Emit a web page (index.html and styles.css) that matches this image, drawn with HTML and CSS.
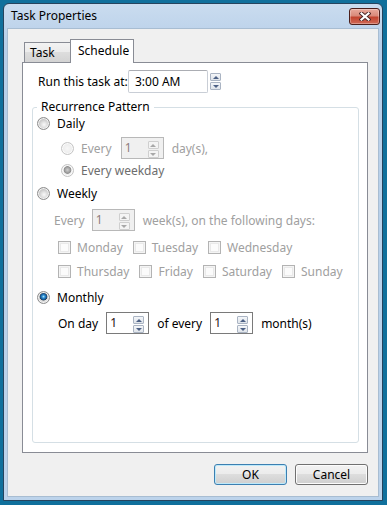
FILE: index.html
```html
<!DOCTYPE html>
<html lang="en">
<head>
    <meta charset="UTF-8">
    <meta name="viewport" content="width=device-width, initial-scale=1.0">
    <title>Task Properties</title>
    <link rel="stylesheet" href="styles.css">
</head>
<body>
    <div class="window">
        <div class="titlebar">
            <span class="title">Task Properties</span>
            <button class="close" type="button" aria-label="Close">
                <svg width="12" height="9" viewBox="0 0 12 9">
                    <path d="M2.5 1.5 L9.5 7.5 M9.5 1.5 L2.5 7.5" stroke="#4a2626" stroke-width="4" stroke-linecap="square" fill="none"/>
                    <path d="M2.5 1.5 L9.5 7.5 M9.5 1.5 L2.5 7.5" stroke="#fff" stroke-width="2.2" stroke-linecap="square" fill="none"/>
                </svg>
            </button>
        </div>
        <div class="client">
            <div class="tabs">
                <div class="tab">Task</div>
                <div class="tab active">Schedule</div>
            </div>
            <div class="panel">
                <div class="run-row">
                    <span class="run-label">Run this task at:</span>
                    <div class="time-box">3:00 AM</div>
                    <div class="spin-btns side"><span class="up"></span><span class="down"></span></div>
                </div>

                <fieldset class="group">
                    <legend>Recurrence Pattern</legend>

                    <div class="row r-daily">
                        <span class="radio"></span>
                        <span>Daily</span>
                    </div>
                    <div class="row tall r-daily-every sub">
                        <span class="radio disabled"></span>
                        <span class="muted">Every</span>
                        <div class="spin disabled"><span class="spin-val">1</span><div class="spin-btns"><span class="up"></span><span class="down"></span></div></div>
                        <span class="muted">day(s),</span>
                    </div>
                    <div class="row r-weekday sub">
                        <span class="radio disabled checked"></span>
                        <span class="dim">Every weekday</span>
                    </div>

                    <div class="row r-weekly">
                        <span class="radio"></span>
                        <span>Weekly</span>
                    </div>
                    <div class="row tall r-weekly-every">
                        <span class="muted">Every</span>
                        <div class="spin disabled"><span class="spin-val">1</span><div class="spin-btns"><span class="up"></span><span class="down"></span></div></div>
                        <span class="muted">week(s), on the following days:</span>
                    </div>
                    <div class="row days r-days1">
                        <label class="day"><span class="check"></span>Monday</label>
                        <label class="day"><span class="check"></span>Tuesday</label>
                        <label class="day"><span class="check"></span>Wednesday</label>
                    </div>
                    <div class="row days r-days2">
                        <label class="day"><span class="check"></span>Thursday</label>
                        <label class="day"><span class="check"></span>Friday</label>
                        <label class="day"><span class="check"></span>Saturday</label>
                        <label class="day"><span class="check"></span>Sunday</label>
                    </div>

                    <div class="row r-monthly">
                        <span class="radio checked"></span>
                        <span>Monthly</span>
                    </div>
                    <div class="row tall r-onday">
                        <span>On day</span>
                        <div class="spin"><span class="spin-val">1</span><div class="spin-btns"><span class="up"></span><span class="down"></span></div></div>
                        <span>of every</span>
                        <div class="spin"><span class="spin-val">1</span><div class="spin-btns"><span class="up"></span><span class="down"></span></div></div>
                        <span>month(s)</span>
                    </div>
                </fieldset>
            </div>
            <div class="actions">
                <button class="btn default" type="button">OK</button>
                <button class="btn" type="button">Cancel</button>
            </div>
        </div>
    </div>
</body>
</html>
```

FILE: styles.css
```css
html, body {
    height: 100%;
}
body {
    margin: 0;
    overflow: hidden;
    background: #10709c;
    font-family: "Noto Sans", "Open Sans", sans-serif;
    font-size: 12px;
    color: #000;
}
.window {
    box-sizing: border-box;
    width: 380px;
    margin: 3px 0 0 3px;
    padding: 0 3px 3px;
    border: 1px solid #26445e;
    border-radius: 6px 6px 0 0;
    background: linear-gradient(#cadcef, #b7cfe9 40px, #bcd3eb);
}
.titlebar {
    height: 24px;
    display: flex;
    align-items: center;
    justify-content: space-between;
    padding-left: 4px;
}
.title {
    line-height: 16px;
}
.close {
    width: 31px;
    height: 17px;
    margin-right: -1px;
    padding: 0;
    display: flex;
    align-items: center;
    justify-content: center;
    border: 1px solid #4b1f1b;
    border-radius: 3px;
    background: linear-gradient(#e9aa9c, #d98a7a 45%, #c2442f 55%, #d06a57);
    box-shadow: inset 0 0 0 1px rgba(255,255,255,0.3);
}
.client {
    box-sizing: border-box;
    height: 469px;
    background: #f0f0f0;
    border: 1px solid #a8bdd2;
}

/* tabs */
.tabs {
    display: flex;
    align-items: flex-end;
    margin: 10px 0 0 16px;
}
.tab {
    box-sizing: border-box;
    width: 46px;
    height: 20px;
    padding-left: 5px;
    line-height: 20px;
    border: 1px solid #898c95;
    border-bottom: 0;
    border-right: 0;
    background: linear-gradient(#f3f3f3, #ebebeb 50%, #dddddd 50%, #d3d3d3);
}
.tab.active {
    position: relative;
    z-index: 1;
    width: 64px;
    height: 24px;
    padding-left: 7px;
    line-height: 22px;
    margin-bottom: -1px;
    border-right: 1px solid #898c95;
    background: #fff;
}
.panel {
    box-sizing: border-box;
    width: 346px;
    height: 391px;
    margin-left: 14px;
    padding: 7px 0 0 9px;
    border: 1px solid #898c95;
    background: #fff;
}

/* run row */
.run-row {
    display: flex;
    align-items: center;
    height: 23px;
    padding-left: 6px;
}
.run-label {
    width: 90px;
}
.time-box {
    box-sizing: border-box;
    width: 80px;
    height: 23px;
    padding-left: 6px;
    line-height: 21px;
    border: 1px solid #c9ced6;
    border-top-color: #abadb3;
    border-radius: 2px;
}
.spin-btns {
    display: flex;
    flex-direction: column;
    gap: 1px;
    margin: 3px 4px 0 0;
}
.spin-btns.side {
    margin: 0 0 0 2px;
}
.spin-btns span {
    box-sizing: border-box;
    width: 11px;
    height: 8px;
    display: flex;
    align-items: center;
    justify-content: center;
    border: 1px solid #aab4c3;
    border-radius: 1px;
    background: linear-gradient(#f4f6f9, #dfe4ea);
}
.spin-btns span::after {
    content: "";
    border-left: 3px solid transparent;
    border-right: 3px solid transparent;
}
.spin-btns .up::after {
    border-bottom: 3px solid #4d6185;
}
.spin-btns .down::after {
    border-top: 3px solid #4d6185;
}

/* recurrence group */
.group {
    box-sizing: border-box;
    width: 327px;
    height: 343px;
    margin: 7px 0 0;
    padding: 0 0 0 4px;
    border: 1px solid #d5dfe5;
    border-radius: 3px;
    min-inline-size: 0;
}
.group legend {
    padding: 0 4px;
    line-height: 14px;
}
.row {
    display: flex;
    align-items: center;
    height: 16px;
}
.row.tall {
    height: 22px;
}
.sub {
    padding-left: 24px;
}
.r-daily { margin-top: 1px; }
.r-daily-every { margin-top: 6px; }
.r-weekday { margin-top: 3px; }
.r-weekly { margin-top: 7px; }
.r-weekly-every { margin-top: 8px; padding-left: 17px; }
.r-days1 { margin-top: 8px; }
.r-days2 { margin-top: 8px; }
.r-monthly { margin-top: 10px; }
.r-onday { margin-top: 7px; padding-left: 21px; }

.r-daily-every .spin { margin: 0 8px 0 9px; }
.r-weekly-every .spin { margin: 0 8px 0 7px; }
.r-onday .spin { margin: 0 8px 0 8px; }

.muted {
    color: #a0a0a0;
}
.dim {
    color: #6d6d6d;
}

.radio {
    flex: none;
    box-sizing: border-box;
    width: 13px;
    height: 13px;
    margin-right: 7px;
    border-radius: 50%;
    border: 1px solid #8d8d8d;
    background: radial-gradient(circle at 55% 60%, #fafafa 0, #dedede 3px, #c9c9c9 5px);
    box-shadow: inset 0 0 0 1px #f2f2f2;
}
.radio.checked {
    background: radial-gradient(circle at 50% 42%, #b4e6fb 0, #2f8fd0 1.5px, #145595 3px, #33434f 3.6px, transparent 4.2px),
                radial-gradient(circle at 55% 60%, #fafafa 0, #dedede 3px, #c9c9c9 5px);
}
.radio.disabled {
    border-color: #c4c4c4;
    background: radial-gradient(circle, #f7f7f7 0, #ececec 5px);
    box-shadow: inset 0 0 0 1px #fbfbfb;
}
.radio.disabled.checked {
    background: radial-gradient(circle at 50% 45%, #d0d0d0 0, #a3a3a3 2.5px, #8e8e8e 3.5px, transparent 4.2px),
                radial-gradient(circle, #f7f7f7 0, #ececec 5px);
}

.days {
    padding-left: 21px;
    gap: 10px;
}
.day {
    display: flex;
    align-items: center;
    color: #a0a0a0;
}
.check {
    flex: none;
    box-sizing: border-box;
    width: 13px;
    height: 13px;
    margin-right: 6px;
    border: 1px solid #b3b3b3;
    background: #fbfbfb;
    box-shadow: inset 0 0 0 1px #f4f4f4, inset 0 0 0 2px #e9e9e9;
}

.spin {
    flex: none;
    box-sizing: border-box;
    display: flex;
    width: 43px;
    height: 22px;
    border: 1px solid #7a7a7a;
    background: #fff;
}
.spin-val {
    flex: 1;
    padding-left: 3px;
    line-height: 20px;
    color: #2a1010;
}
.spin.disabled {
    border-color: #b8b8b8;
    background: #f0f0f0;
}
.spin.disabled .spin-val {
    color: #8e7d7d;
}
.spin.disabled .spin-btns span {
    border-color: #cfcfcf;
    background: #f4f4f4;
}
.spin.disabled .spin-btns .up::after {
    border-bottom-color: #a8a8a8;
}
.spin.disabled .spin-btns .down::after {
    border-top-color: #a8a8a8;
}

/* buttons */
.actions {
    display: flex;
    justify-content: flex-end;
    gap: 8px;
    width: 346px;
    margin: 11px 0 0 14px;
}
.btn {
    box-sizing: border-box;
    width: 73px;
    height: 21px;
    padding: 0;
    border: 1px solid #707070;
    border-radius: 3px;
    background: linear-gradient(#f2f2f2, #ebebeb 50%, #dddddd 50%, #cfcfcf);
    box-shadow: inset 0 0 0 1px #fcfcfc;
    font: inherit;
    color: #000;
}
.btn.default {
    border-color: #3c7fb1;
    box-shadow: inset 0 0 0 1px #bde9fa;
}
```
